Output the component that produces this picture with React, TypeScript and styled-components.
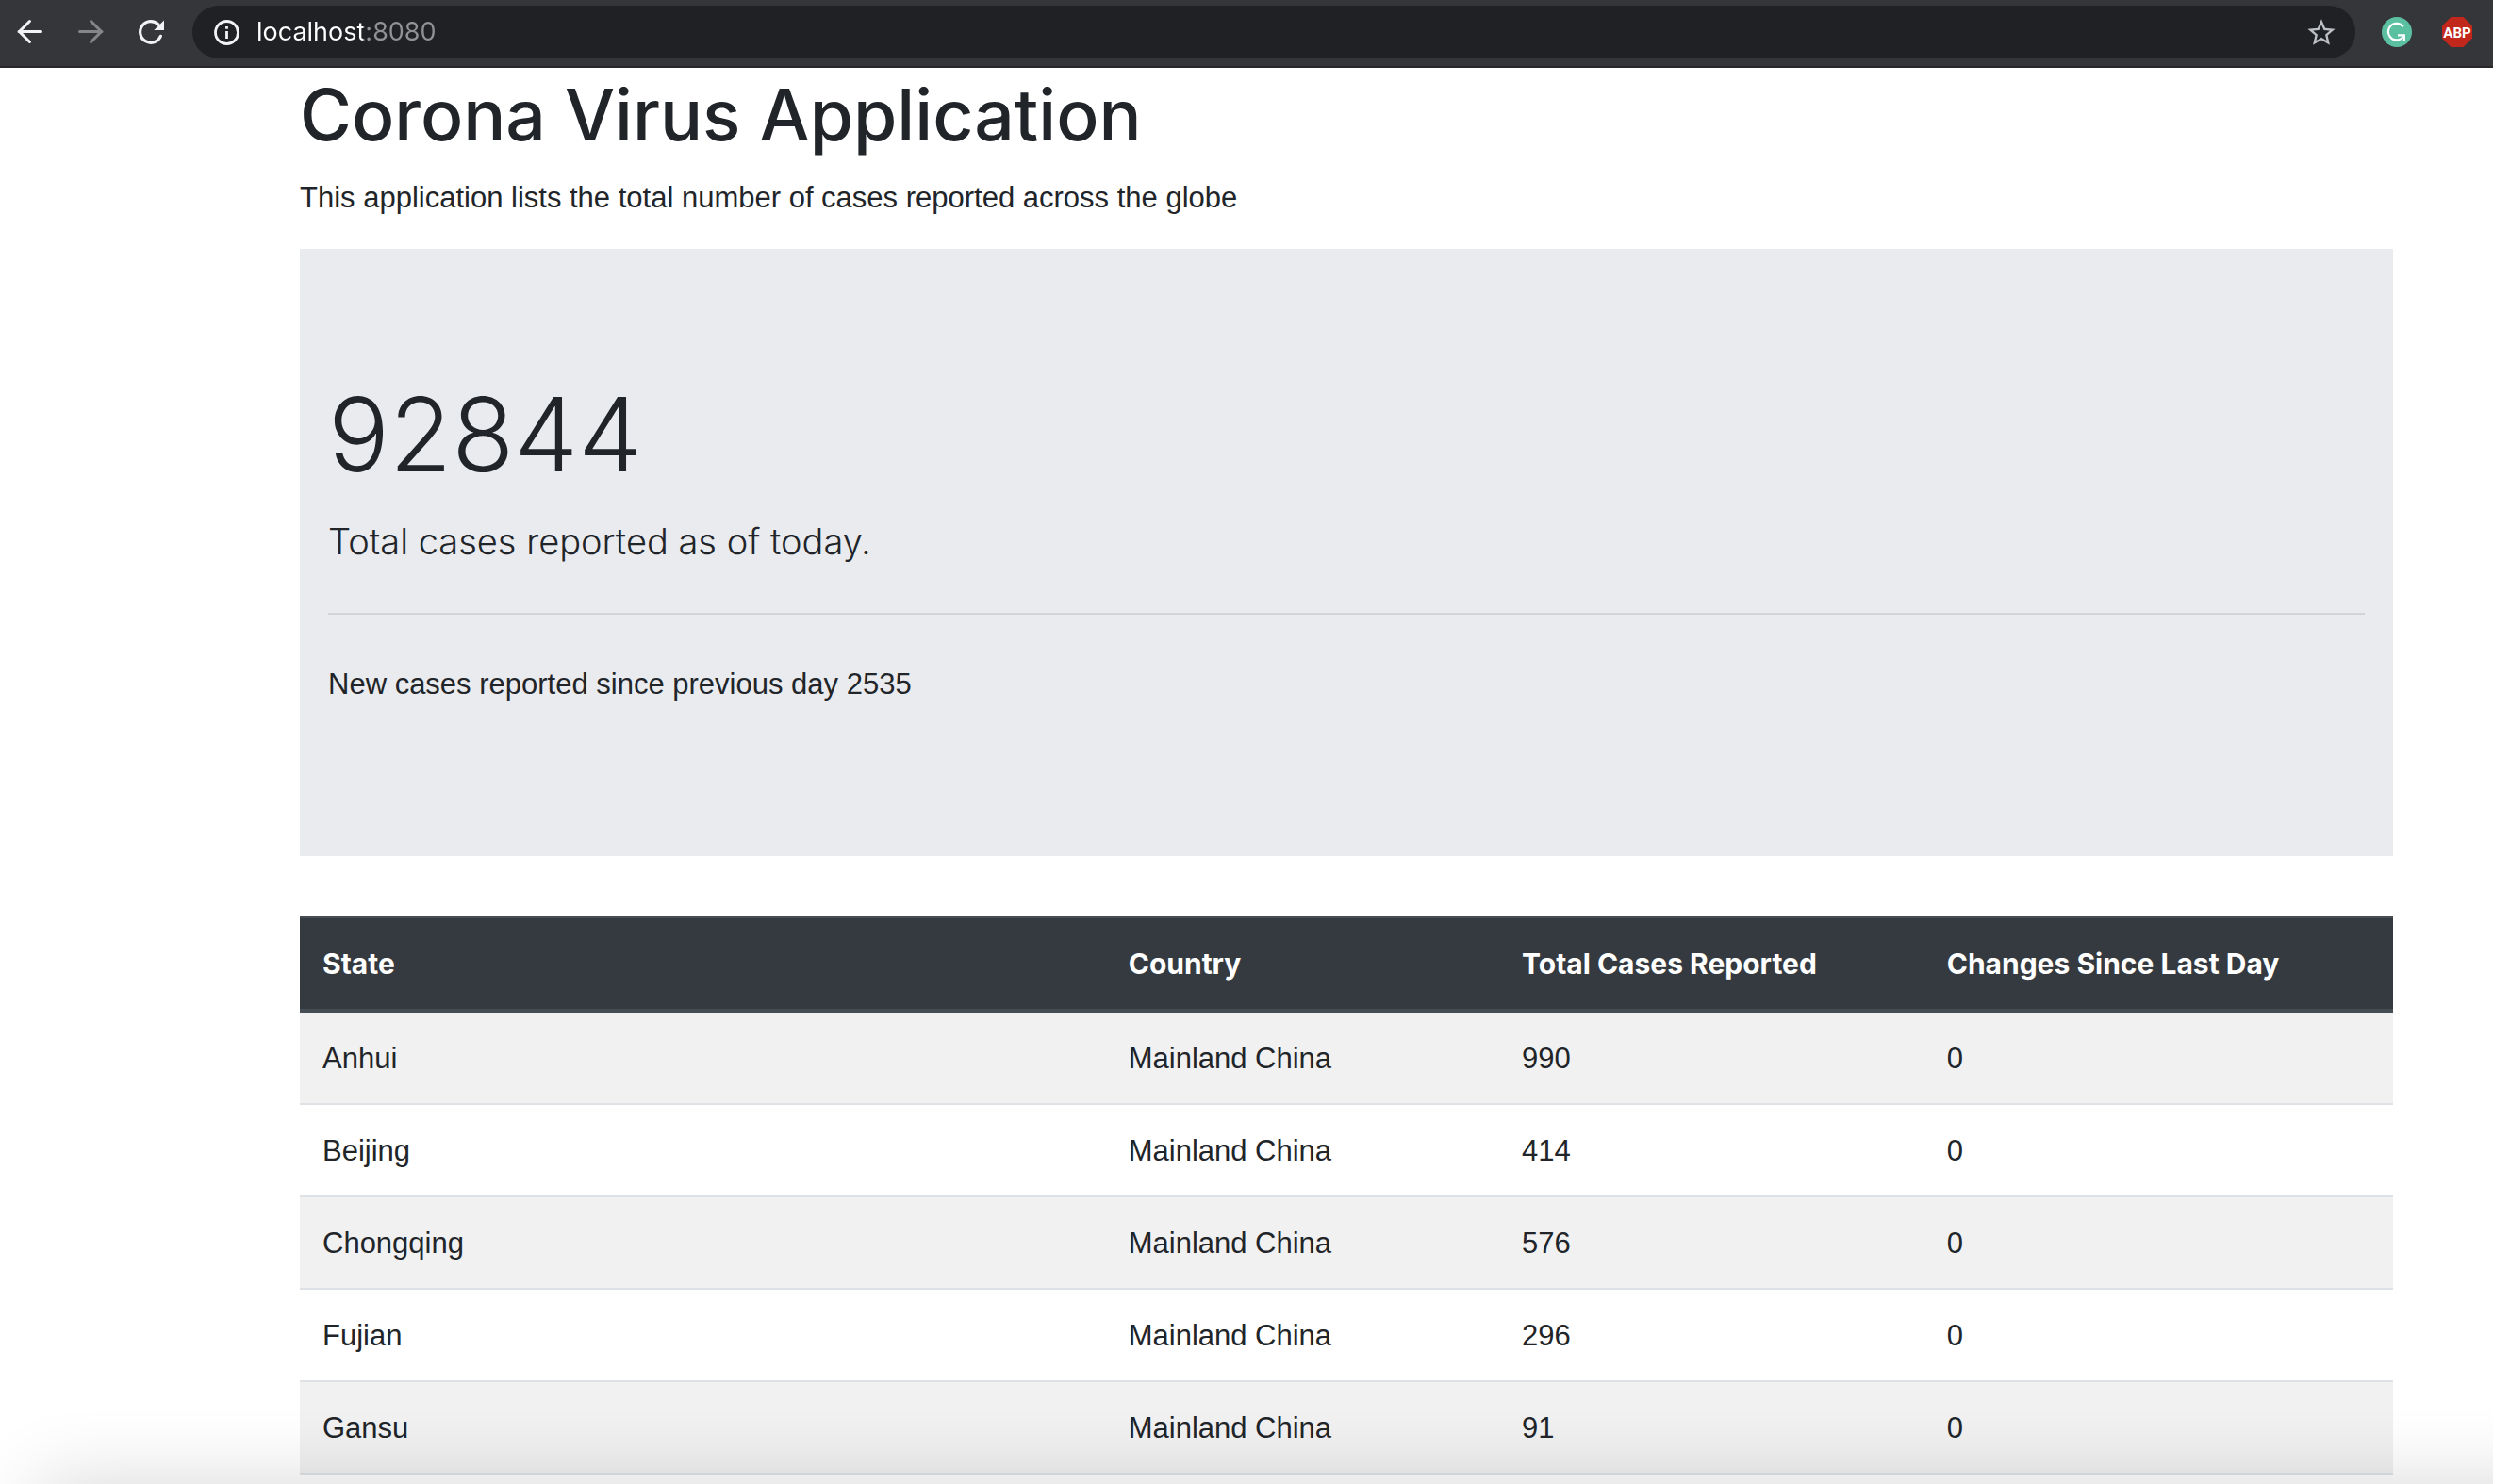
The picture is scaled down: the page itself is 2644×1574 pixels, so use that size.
import React from "react";
import styled, { createGlobalStyle } from "styled-components";

const displayFont = `Inter, "Liberation Sans", sans-serif`;

const GlobalStyle = createGlobalStyle`
  *, *::before, *::after { box-sizing: border-box; }
  body {
    margin: 0;
    background: #fff;
    color: #212529;
    font-family: "Liberation Sans", Arial, sans-serif;
    font-size: 31px;
    line-height: 48px;
  }
`;

const Toolbar = styled.header`
  display: flex;
  align-items: center;
  gap: 32px;
  height: 72px;
  padding: 0 22px 4px 16px;
  background: #35363a;
  box-shadow: inset 0 -2px 0 #292728;
`;

const IconButton = styled.button`
  display: flex;
  flex: none;
  padding: 0;
  border: 0;
  background: none;
  color: #f1f3f4;

  &:disabled { color: #85868a; }
`;

const AddressBar = styled.div`
  display: flex;
  flex: 1;
  align-items: center;
  gap: 16px;
  height: 56px;
  margin: 0 -4px;
  padding: 0 20px;
  border-radius: 28px;
  background: #202124;
`;

/* The host is bright and the port is dimmed, as in the browser's own bar. */
const UrlInput = styled.input`
  flex: 1;
  min-width: 0;
  height: 40px;
  padding: 0;
  border: 0;
  outline: 0;
  background: linear-gradient(to right, #fff 113px, #919295 113px);
  background-clip: text;
  -webkit-text-fill-color: transparent;
  color: #fff;
  font-family: ${displayFont};
  font-size: 27px;
  line-height: 40px;
`;

const Page = styled.main`
  padding: 0 106px 0 318px;
`;

const Title = styled.h1`
  margin: 0;
  padding: 2px 0 16px;
  font-family: ${displayFont};
  font-size: 75px;
  font-weight: 500;
  line-height: 96px;
`;

const Text = styled.p`
  margin: 0 0 30px;
`;

const Jumbotron = styled.section`
  margin-bottom: 64px;
  padding: 130px 30px 128px;
  background: #eaebef;
`;

const JumbotronBody = styled.div`
  display: flow-root;
`;

const Total = styled.h2`
  margin: 0 0 16px;
  font-family: ${displayFont};
  font-size: 108px;
  font-weight: 300;
  line-height: 134px;
`;

const Lead = styled.p`
  margin: 0;
  font-family: ${displayFont};
  font-size: 38px;
  font-weight: 300;
  line-height: 60px;
`;

const Divider = styled.hr`
  margin: 46px 0 50px;
  border: 0;
  border-top: 2px solid #d2d4d8;
`;

const Table = styled.table`
  width: 100%;
  border-spacing: 0;
  table-layout: fixed;
`;

const HeadCell = styled.th<{ $width: string }>`
  width: ${(p) => p.$width};
  padding: 24px;
  border-top: 2px solid #454d55;
  border-bottom: 4px solid #454d55;
  background: #343a40;
  color: #fff;
  font-family: ${displayFont};
  font-size: 30px;
  font-weight: 700;
  text-align: left;
`;

const Row = styled.tr`
  &:nth-child(odd) { background: #f1f1f2; }
`;

const Cell = styled.td`
  padding: 25px 24px 23px;
  border-bottom: 2px solid #dee2e6;
`;

const DockShade = styled.div`
  position: fixed;
  top: 100%;
  left: 40px;
  right: -120px;
  height: 160px;
  box-shadow: 0 0 84px rgba(0, 0, 0, 0.16);
  pointer-events: none;
`;

const columns = [
  { label: "State", width: "38.5%" },
  { label: "Country", width: "18.8%" },
  { label: "Total Cases Reported", width: "20.3%" },
  { label: "Changes Since Last Day", width: "22.4%" },
];

const rows = [
  { state: "Anhui", country: "Mainland China", total: 990, change: 0 },
  { state: "Beijing", country: "Mainland China", total: 414, change: 0 },
  { state: "Chongqing", country: "Mainland China", total: 576, change: 0 },
  { state: "Fujian", country: "Mainland China", total: 296, change: 0 },
  { state: "Gansu", country: "Mainland China", total: 91, change: 0 },
];

const ArrowIcon = ({ forward = false }: { forward?: boolean }) => (
  <svg width="32" height="32" viewBox="0 0 32 32" fill="none" stroke="currentColor" strokeWidth="3" strokeLinecap="round">
    {forward ? <path d="M4.5 15.5H28M16.5 4.5l11 11-11 11" /> : <path d="M27.5 15.5H4M15.5 4.5l-11 11 11 11" />}
  </svg>
);

const ReloadIcon = () => (
  <svg width="32" height="32" viewBox="0 0 32 32" fill="none">
    <path d="M26.4 20.3A11.3 11.3 0 1 1 24 8" stroke="currentColor" strokeWidth="3.2" strokeLinecap="round" />
    <path d="M30 3.5V14H19.3z" fill="currentColor" />
  </svg>
);

const InfoIcon = () => (
  <svg width="32" height="32" viewBox="0 0 32 32" fill="none">
    <circle cx="16.5" cy="16.5" r="12" stroke="currentColor" strokeWidth="2.8" />
    <path d="M15.1 15h2.8v8h-2.8zM15.1 10h2.8v2.8h-2.8z" fill="currentColor" />
  </svg>
);

const StarIcon = () => (
  <svg width="32" height="32" viewBox="1 0.5 22 22" fill="#bdc1c6">
    <path d="M22 9.24l-7.19-.62L12 2 9.19 8.63 2 9.24l5.46 4.73L5.82 21 12 17.27 18.18 21l-1.63-7.03L22 9.24zM12 15.4l-3.76 2.27 1-4.28-3.32-2.88 4.38-.38L12 6.1l1.71 4.04 4.38.38-3.32 2.88 1 4.28L12 15.4z" />
  </svg>
);

const GrammarlyIcon = () => (
  <svg width="32" height="32" viewBox="0 0 32 32" fill="none">
    <circle cx="16" cy="16" r="16" fill="#5bc0a0" />
    <path d="M22.8 10.3A8.8 8.8 0 1 0 16 24.4c3.5 0 6.2-2 7.6-5" stroke="#fff" strokeWidth="2.2" />
    <path d="M17 19.3h6.8V25" stroke="#fff" strokeWidth="2.2" />
  </svg>
);

const AdblockIcon = () => (
  <svg width="32" height="32" viewBox="0 0 32 32">
    <path d="M9.4 0h13.2L32 9.4v13.2L22.6 32H9.4L0 22.6V9.4z" fill="#c1271a" />
    <text x="16" y="22" textAnchor="middle" fill="#fff" fontFamily="Roboto, sans-serif" fontSize="15" fontWeight="700">
      ABP
    </text>
  </svg>
);

export default function App() {
  return (
    <>
      <GlobalStyle />
      <Toolbar>
        <IconButton aria-label="Back"><ArrowIcon /></IconButton>
        <IconButton aria-label="Forward" disabled><ArrowIcon forward /></IconButton>
        <IconButton aria-label="Reload"><ReloadIcon /></IconButton>
        <AddressBar>
          <IconButton aria-label="Site information"><InfoIcon /></IconButton>
          <UrlInput aria-label="Address" type="text" defaultValue="localhost:8080" />
          <IconButton aria-label="Bookmark this page"><StarIcon /></IconButton>
        </AddressBar>
        <IconButton aria-label="Grammarly"><GrammarlyIcon /></IconButton>
        <IconButton aria-label="Adblock Plus"><AdblockIcon /></IconButton>
      </Toolbar>
      <Page>
        <Title>Corona Virus Application</Title>
        <Text>This application lists the total number of cases reported across the globe</Text>
        <Jumbotron>
          <JumbotronBody>
            <Total>92844</Total>
            <Lead>Total cases reported as of today.</Lead>
            <Divider />
            <Text>New cases reported since previous day 2535</Text>
          </JumbotronBody>
        </Jumbotron>
        <Table>
          <thead>
            <tr>
              {columns.map((c) => (
                <HeadCell key={c.label} scope="col" $width={c.width}>{c.label}</HeadCell>
              ))}
            </tr>
          </thead>
          <tbody>
            {rows.map((r) => (
              <Row key={r.state}>
                <Cell>{r.state}</Cell>
                <Cell>{r.country}</Cell>
                <Cell>{r.total}</Cell>
                <Cell>{r.change}</Cell>
              </Row>
            ))}
          </tbody>
        </Table>
      </Page>
      <DockShade />
    </>
  );
}
